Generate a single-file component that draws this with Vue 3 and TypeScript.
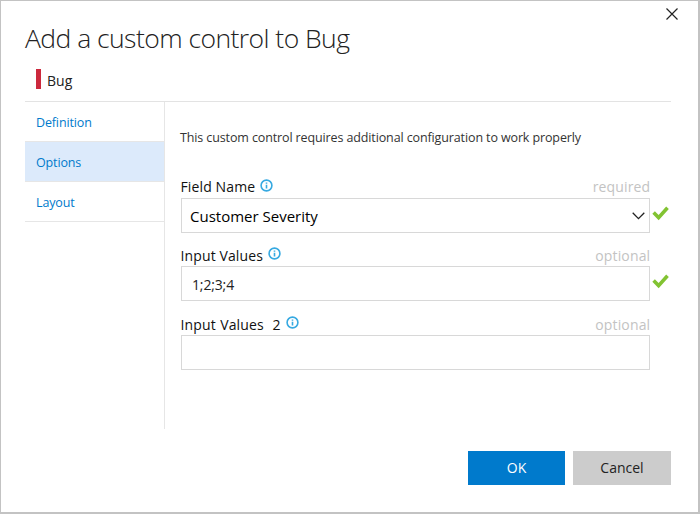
<script setup lang="ts">
import { ref } from 'vue'

interface Field {
  key: string
  label: string
  hint: string
  value: string
  select: boolean
  valid: boolean
}

const tabs: string[] = ['Definition', 'Options', 'Layout']
const active = ref('Options')
const fields = ref<Field[]>([
  { key: 'name', label: 'Field Name', hint: 'required', value: 'Customer Severity', select: true, valid: true },
  { key: 'values', label: 'Input Values', hint: 'optional', value: '1;2;3;4', select: false, valid: true },
  { key: 'values2', label: 'Input Values\u00a0 2', hint: 'optional', value: '', select: false, valid: false },
])
</script>

<template>
  <div class="dialog">
    <header class="head">
      <h1><span class="title">Add a custom control to Bug</span></h1>
      <svg class="close" viewBox="0 0 12 12"><path d="M.5.5l11 11M11.5.5l-11 11" /></svg>
    </header>
    <div class="type"><i class="bar"></i><span class="type-name">Bug</span></div>
    <div class="body">
      <nav>
        <a v-for="t in tabs" :key="t" :class="['tab', t.toLowerCase(), { active: t === active }]" @click="active = t"><span>{{ t }}</span></a>
      </nav>
      <main>
        <p><span class="desc">This custom control requires additional configuration to work properly</span></p>
        <section v-for="f in fields" :key="f.key" :class="['field', f.key]">
          <div class="label-row">
            <span class="label">{{ f.label }}</span>
            <svg class="info" viewBox="0 0 13 13">
              <circle cx="6.5" cy="6.5" r="5.4" />
              <path d="M6.5 5.7v3.8M6.5 3.5v1.3" />
            </svg>
            <span class="hint">{{ f.hint }}</span>
          </div>
          <div class="control-row">
            <div class="control">
              <span class="value">{{ f.value }}</span>
              <svg v-if="f.select" class="chevron" viewBox="0 0 13 8"><path d="M.7.8l5.8 5.8L12.3.8" /></svg>
            </div>
            <svg v-if="f.valid" class="check" viewBox="0 0 17 15"><path d="M1.6 6.6l5 5L15.5 1.8" /></svg>
          </div>
        </section>
      </main>
    </div>
    <footer>
      <button class="ok"><span>OK</span></button>
      <button class="cancel"><span>Cancel</span></button>
    </footer>
  </div>
</template>

<style>
body {
  margin: 0;
}
</style>

<style scoped>
.dialog {
  box-sizing: border-box;
  width: 700px;
  height: 514px;
  border: 1px solid #c3c3c3;
  border-right-width: 2px;
  border-bottom-width: 2px;
  background: #fff;
  color: #222;
  font-family: 'Open Sans', 'Noto Sans', sans-serif;
  display: flex;
  flex-direction: column;
  overflow: hidden;
}
svg {
  display: block;
  fill: none;
  flex: none;
}
.head {
  display: flex;
  justify-content: space-between;
  height: 67px;
  padding: 0 20px 0 24px;
}
h1 {
  margin: 13px 0 0;
  font-size: 26.5px;
  line-height: 48px;
  height: 48px;
  font-weight: 300;
  white-space: nowrap;
  letter-spacing: -0.55px;
}
.close {
  width: 12px;
  height: 12px;
  margin-top: 7px;
  stroke: #222;
  stroke-width: 1.2;
}
.type {
  display: flex;
  height: 33px;
  padding-left: 35px;
  font-size: 14px;
  line-height: 25px;
}
.bar {
  width: 5px;
  height: 20px;
  margin: 1px 6px 0 0;
  background: #cc293d;
}
.body {
  display: flex;
  height: 328px;
  width: 646px;
  margin-left: 24px;
  box-sizing: border-box;
  border-top: 1px solid #e3e3e3;
}
nav {
  width: 139px;
  flex: none;
  border-right: 1px solid #e6e6e6;
}
.tab {
  display: block;
  box-sizing: border-box;
  height: 40px;
  padding-left: 11px;
  border-bottom: 1px solid #e6e6e6;
  color: #007acc;
  font-size: 12.5px;
  letter-spacing: -0.14px;
  line-height: 42px;
}
.tab.active {
  background: #dceafb;
}
main {
  padding-left: 15px;
  flex: 1;
}
p {
  margin: 25px 0 28px;
  font-size: 12.5px;
  letter-spacing: -0.12px;
  line-height: 22px;
  white-space: nowrap;
  color: #333;
}
.field {
  width: 491px;
  padding-left: 1px;
  box-sizing: border-box;
  height: 68px;
}
.field.values {
  height: 69px;
}
.label-row {
  display: flex;
  height: 21px;
  line-height: 20px;
  width: 469px;
  font-size: 14px;
  color: #111;
}
.values .label-row,
.values2 .label-row {
  line-height: 22px;
}
.label {
  white-space: pre;
  letter-spacing: 0.12px;
  margin-left: -0.5px;
}
.values2 .label {
  word-spacing: 0.7px;
}
.info {
  width: 13px;
  height: 13px;
  margin: 2px 0 0 5px;
  stroke: #36a9e1;
  stroke-width: 1.6;
}
.hint {
  margin-left: auto;
  margin-right: -0.3px;
  color: #c3c3c3;
  letter-spacing: 0.15px;
}
.control-row {
  display: flex;
}
.control {
  box-sizing: border-box;
  width: 469px;
  height: 35px;
  border: 1px solid #d8d8d8;
  padding: 0 4px 0 8px;
  display: flex;
  align-items: center;
  justify-content: space-between;
  font-size: 14px;
  color: #222;
}
.name .control {
  font-size: 15px;
  color: #000;
}
.values .value {
  padding: 2px 0 0 2px;
  letter-spacing: -0.15px;
}
.chevron {
  width: 13px;
  height: 8px;
  stroke: #222;
  stroke-width: 1.3;
}
.check {
  width: 17px;
  height: 15px;
  margin: 8px 0 0 2px;
  stroke: #82c332;
  stroke-width: 3.6;
}
footer {
  display: flex;
  justify-content: flex-end;
  gap: 8px;
  padding: 22px 27px 0 0;
}
button {
  width: 98px;
  height: 34px;
  padding: 0;
  border: 0;
  font: 14px/34px 'Open Sans', 'Noto Sans', sans-serif;
}
.ok {
  width: 97px;
  background: #007acc;
  color: #fff;
}
.cancel {
  background: #ccc;
  color: #222;
}
</style>
